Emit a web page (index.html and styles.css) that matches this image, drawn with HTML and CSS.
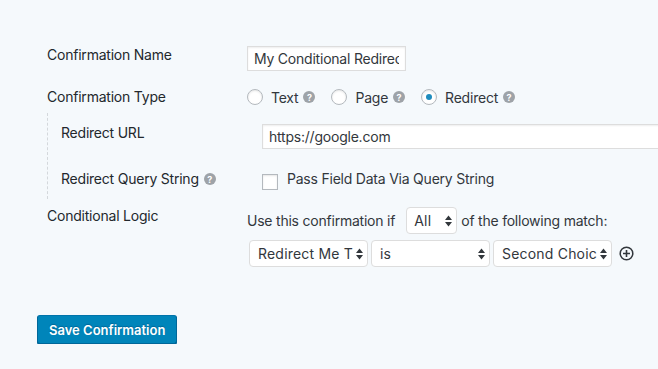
FILE: index.html
```html
<!DOCTYPE html>
<html>
<head>
<meta charset="utf-8">
<link rel="stylesheet" href="styles.css">
</head>
<body>
<div class="page">
  <div class="settings">
    <div class="row row-name">
      <div class="label">Confirmation Name</div>
      <div class="field"><input class="text-input name-input" type="text" value="My Conditional Redirect"></div>
    </div>
    <div class="row row-type">
      <div class="label">Confirmation Type</div>
      <div class="field radios">
        <span class="radio"></span><span class="radio-label">Text</span><span class="help">?</span>
        <span class="radio"></span><span class="radio-label">Page</span><span class="help">?</span>
        <span class="radio checked"><span class="dot"></span></span><span class="radio-label">Redirect</span><span class="help">?</span>
      </div>
    </div>
    <div class="nested">
      <div class="row row-url">
        <div class="label sub-label">Redirect URL</div>
        <div class="field"><input class="text-input url-input" type="text" value="https://google.com"></div>
      </div>
      <div class="row row-query">
        <div class="label sub-label">Redirect Query String <span class="help">?</span></div>
        <div class="field check-field">
          <span class="checkbox"></span><span class="check-label">Pass Field Data Via Query String</span>
        </div>
      </div>
    </div>
    <div class="row row-logic">
      <div class="label">Conditional Logic</div>
      <div class="logic">
        <div class="sentence">
          <span>Use this confirmation if</span>
          <div class="select select-all"><span class="select-text">All</span><svg class="arrows" width="7" height="12" viewBox="0 0 7 12"><path d="M3.5 0.5 L7 5 L0 5 Z M3.5 11.5 L7 7 L0 7 Z" fill="#32373c"/></svg></div>
          <span>of the following match:</span>
        </div>
        <div class="rule">
          <div class="select select-rule"><span class="select-text">Redirect Me T</span><svg class="arrows" width="7" height="12" viewBox="0 0 7 12"><path d="M3.5 0.5 L7 5 L0 5 Z M3.5 11.5 L7 7 L0 7 Z" fill="#32373c"/></svg></div>
          <div class="select select-rule"><span class="select-text">is</span><svg class="arrows" width="7" height="12" viewBox="0 0 7 12"><path d="M3.5 0.5 L7 5 L0 5 Z M3.5 11.5 L7 7 L0 7 Z" fill="#32373c"/></svg></div>
          <div class="select select-rule"><span class="select-text">Second Choic</span><svg class="arrows" width="7" height="12" viewBox="0 0 7 12"><path d="M3.5 0.5 L7 5 L0 5 Z M3.5 11.5 L7 7 L0 7 Z" fill="#32373c"/></svg></div>
          <svg class="add" width="15" height="15" viewBox="0 0 15 15"><circle cx="7.5" cy="7.5" r="6.3" fill="none" stroke="#32373c" stroke-width="1.5"/><path d="M7.5 4 V11 M4 7.5 H11" stroke="#32373c" stroke-width="1.6"/></svg>
        </div>
      </div>
    </div>
  </div>
  <button class="button-primary" type="button">Save Confirmation</button>
</div>
</body>
</html>
```

FILE: styles.css
```css
* { box-sizing: border-box; }

body {
  margin: 0;
  background: #f5f9fc;
  font-family: Inter, "Liberation Sans", sans-serif;
  font-size: 14px;
  letter-spacing: -0.22px;
  color: #23282d;
}

.page {
  padding: 46px 0 0 37px;
}

.settings {
  margin-left: 10px;
}

.row {
  display: flex;
  align-items: flex-start;
}

.label {
  width: 200px;
  flex: none;
  line-height: 18px;
  display: flex;
  align-items: center;
}

.sub-label {
  width: 201px;
}

.field {
  display: flex;
  align-items: center;
}

.text-input {
  height: 25px;
  margin: 0;
  padding: 0 6px;
  border: 1px solid #dddddd;
  background: #ffffff;
  box-shadow: inset 0 1px 2px rgba(0, 0, 0, 0.07);
  font-family: inherit;
  font-size: 14px;
  letter-spacing: -0.22px;
  color: #32373c;
  outline: none;
}

.name-input { width: 159px; }
.url-input { width: 430px; }

.row-type {
  margin-top: 16px;
  height: 20px;
  align-items: center;
}

.radios { height: 20px; }

.radio {
  width: 16px;
  height: 16px;
  flex: none;
  border: 1px solid #b4b9be;
  border-radius: 50%;
  background: #ffffff;
  box-shadow: inset 0 1px 2px rgba(0, 0, 0, 0.1);
  display: flex;
  align-items: center;
  justify-content: center;
  margin-left: 16px;
}

.radio:first-child { margin-left: 0; }

.dot {
  width: 6px;
  height: 6px;
  border-radius: 50%;
  background: #1e8cbe;
}

.radio-label {
  margin-left: 8px;
  color: #32373c;
}

.help {
  display: inline-flex;
  align-items: center;
  justify-content: center;
  width: 12px;
  height: 12px;
  border-radius: 50%;
  background: #9ea3a8;
  color: #ffffff;
  font-size: 9px;
  font-weight: 700;
  letter-spacing: 0;
  line-height: 1;
  margin-left: 5px;
  flex: none;
}

.nested {
  margin-top: 6px;
  border-left: 1px dashed #d4d8dc;
  padding: 11px 0 9px 13px;
}

.row-query { margin-top: 21px; }

.check-field { align-items: flex-start; }

.checkbox {
  width: 16px;
  height: 16px;
  flex: none;
  margin-top: 4px;
  border: 1px solid #b4b9be;
  background: #ffffff;
  box-shadow: inset 0 1px 2px rgba(0, 0, 0, 0.1);
}

.check-label {
  margin-left: 9px;
  line-height: 18px;
  color: #32373c;
}

.row-logic { margin-top: 8px; }

.logic {
  display: flex;
  flex-direction: column;
}

.sentence {
  display: flex;
  align-items: center;
  height: 27px;
  color: #32373c;
}

.select {
  height: 27px;
  border: 1px solid #dddddd;
  border-radius: 4px;
  background: #ffffff;
  display: flex;
  align-items: center;
  padding: 0 4px 0 8px;
  color: #32373c;
  flex: none;
}

.select-text {
  flex: 1;
  min-width: 0;
  overflow: hidden;
  white-space: nowrap;
  letter-spacing: 0.2px;
}

.arrows {
  flex: none;
  margin-left: 1px;
}

.select-all {
  width: 51px;
  margin: 0 4px 0 11px;
  padding-left: 7px;
}

.rule {
  display: flex;
  align-items: center;
  gap: 3px;
  margin-top: 6px;
  margin-left: 2px;
}

.select-rule { width: 119px; }

.add {
  margin-left: 4px;
  flex: none;
}

.button-primary {
  display: block;
  margin-top: 48px;
  height: 29px;
  padding: 0 11px;
  background: #0085ba;
  border: 1px solid #0073aa;
  border-color: #0073aa #006799 #006799;
  border-radius: 3px;
  box-shadow: 0 1px 0 #006799;
  color: #ffffff;
  font-family: inherit;
  font-size: 13px;
  font-weight: 600;
  letter-spacing: 0;
  text-shadow: 0 -1px 1px #006799;
}
```
